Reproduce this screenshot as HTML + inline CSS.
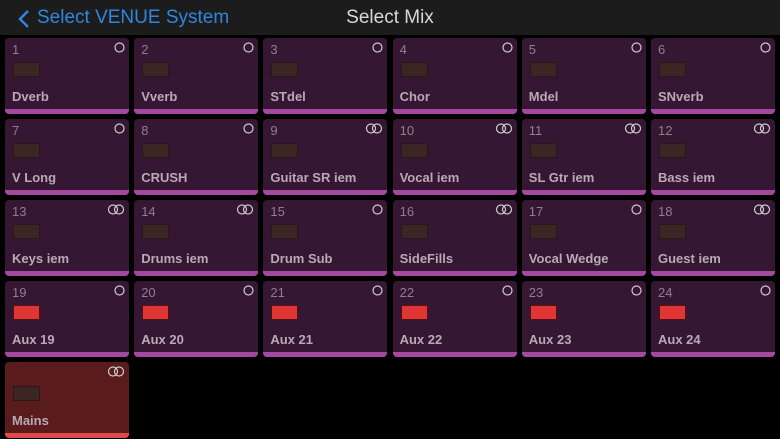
<!DOCTYPE html>
<html><head><style>
*{margin:0;padding:0;box-sizing:border-box}
body{width:780px;height:439px;background:#000;font-family:"Liberation Sans",sans-serif;position:relative;overflow:hidden}
.hdr{position:absolute;left:0;top:0;width:780px;height:35px;background:#1c1c1c}
.back{position:absolute;left:37px;top:7px;color:#2f86e0;font-size:19px}
.chev{position:absolute;left:17px;top:9px}
.title{position:absolute;left:0;width:780px;text-align:center;top:7px;color:#d8d8d8;font-size:19px}
.t{position:absolute;width:124px;height:76px;background:#351733;border-radius:4px;overflow:hidden}
.t .bar{position:absolute;left:0;bottom:0;width:100%;height:5px;background:#a5489f}
.t .n{position:absolute;left:7px;top:4px;color:#8f7f8d;font-size:13px}
.t .ind{position:absolute;left:8px;top:24px;width:27px;height:15px;background:#3b2624;border:1px solid #2a1818}
.t .ind.r{background:#e03535;border-color:#5a1010}
.t .nm{position:absolute;left:7px;top:51px;color:#b8aab5;font-size:13px;font-weight:bold}
.t svg{position:absolute;top:4px;right:4px}
.m{background:#5a1b1d}
.m .bar{background:#e14a4c}
</style></head><body>
<div class="hdr">
<svg class="chev" width="14" height="20" viewBox="0 0 14 20"><path d="M11 2 L3 10 L11 18" stroke="#2f86e0" stroke-width="2.5" fill="none"/></svg>
<div class="back">Select VENUE System</div>
<div class="title">Select Mix</div>
</div>
<div id="g"></div>
<script>
var names=["Dverb","Vverb","STdel","Chor","Mdel","SNverb","V Long","CRUSH","Guitar SR iem","Vocal iem","SL Gtr iem","Bass iem","Keys iem","Drums iem","Drum Sub","SideFills","Vocal Wedge","Guest iem","Aux 19","Aux 20","Aux 21","Aux 22","Aux 23","Aux 24","Mains"];
var st=[9,10,11,12,13,14,16,18,25];
var h="";
for(var i=0;i<25;i++){var c=i%6,r=Math.floor(i/6);var x=5+c*129.2,y=38+r*81;
var s=st.indexOf(i+1)>=0;
var ic=s?'<svg width="18" height="11" viewBox="0 0 18 11"><circle cx="6" cy="5.5" r="4.5" stroke="#ccc" fill="none" stroke-width="1.2"/><circle cx="12" cy="5.5" r="4.5" stroke="#ccc" fill="none" stroke-width="1.2"/></svg>':'<svg width="11" height="11" viewBox="0 0 11 11"><circle cx="5.5" cy="5.5" r="4.5" stroke="#ccc" fill="none" stroke-width="1.2"/></svg>';
h+='<div class="t'+(i==24?' m':'')+'" style="left:'+x+'px;top:'+y+'px"><div class="n">'+(i==24?'':(i+1))+'</div>'+ic+'<div class="ind'+(i>=18&&i<24?' r':'')+'"></div><div class="nm">'+names[i]+'</div><div class="bar"></div></div>';}
document.getElementById("g").innerHTML=h;
</script>
</body></html>
